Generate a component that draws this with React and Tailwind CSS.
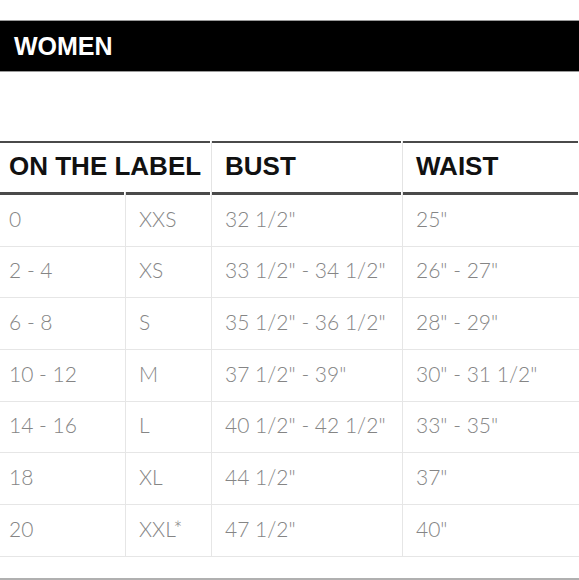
const rows = [
  ['0', 'XXS', '32 1/2"', '25"'],
  ['2 - 4', 'XS', '33 1/2" - 34 1/2"', '26" - 27"'],
  ['6 - 8', 'S', '35 1/2" - 36 1/2"', '28" - 29"'],
  ['10 - 12', 'M', '37 1/2" - 39"', '30" - 31 1/2"'],
  ['14 - 16', 'L', '40 1/2" - 42 1/2"', '33" - 35"'],
  ['18', 'XL', '44 1/2"', '37"'],
  ['20', 'XXL*', '47 1/2"', '40"'],
];

export default function App() {
  return (
    <div className="w-[579px] h-[580px] bg-white overflow-hidden font-['Liberation_Sans',sans-serif]">
      <div className="h-5" />
      <div className="h-[52px] bg-black flex items-center pl-[14px] border-y border-[#9a9a9a]">
        <span className="text-white font-bold text-[25px] leading-none">WOMEN</span>
      </div>
      <div className="h-[69px]" />

      {/* header */}
      <div className="grid grid-cols-[212px_191px_1fr] h-[51px]">
        {['ON THE LABEL', 'BUST', 'WAIST'].map((h, i) => (
          <div key={h} className={`flex flex-col ${i < 2 ? 'border-r border-[#e4e4e4]' : ''}`}>
            <div className="h-[2px] bg-[#4a4a4a] mr-[1px]" />
            <div className={`flex-1 flex items-center pb-1 ${i === 0 ? 'pl-[9px]' : 'pl-[13px]'}`}>
              <span className="font-bold text-[26px] leading-none text-[#111]">{h}</span>
            </div>
          </div>
        ))}
      </div>
      <div className="grid grid-cols-[126px_86px_191px_1fr] h-[3px]">
        {[0, 1, 2, 3].map((i) => (
          <div key={i} className={i < 3 ? 'border-r border-[#e4e4e4]' : ''}>
            <div className="h-[3px] bg-[#4a4a4a] mr-[1px]" />
          </div>
        ))}
      </div>

      {/* body */}
      <div className="font-['Lato',sans-serif] font-light text-[21px] text-[#858585]">
        {rows.map((r) => (
          <div key={r[0]} className="grid grid-cols-[126px_86px_191px_1fr] h-[51.7px] border-b border-[#e6e6e6]">
            {r.map((c, i) => (
              <div
                key={i}
                className={`flex items-center pb-1 whitespace-nowrap ${i < 3 ? 'border-r border-[#e6e6e6]' : ''} ${i === 0 ? 'pl-[9px]' : 'pl-[13px]'}`}
              >
                {c}
              </div>
            ))}
          </div>
        ))}
      </div>
      <div className="h-[21px]" />
      <div className="h-[2px] bg-[#b0b0b0]" />
    </div>
  );
}
